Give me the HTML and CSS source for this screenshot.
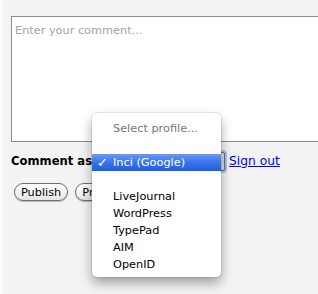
FILE: index.html
```html
<!DOCTYPE html>
<html>
<head>
<meta charset="utf-8">
<link rel="stylesheet" href="styles.css">
</head>
<body>
<div class="page">
  <div class="form">
    <div class="comment"><span class="placeholder">Enter your comment...</span></div>
    <div class="identity">
      <span class="as">Comment as</span>
      <span class="select-box"></span>
      <a class="signout" href="#">Sign out</a>
    </div>
    <div class="actions">
      <button class="pill">Publish</button>
      <button class="pill">Preview</button>
    </div>
  </div>
</div>
<ul class="menu">
  <li class="item muted">Select profile...</li>
  <li class="item blank"></li>
  <li class="item selected"><span class="check">✓</span>Inci (Google)</li>
  <li class="item blank"></li>
  <li class="item">LiveJournal</li>
  <li class="item">WordPress</li>
  <li class="item">TypePad</li>
  <li class="item">AIM</li>
  <li class="item">OpenID</li>
</ul>
</body>
</html>
```
FILE: styles.css
```css
html, body {
  margin: 0;
  padding: 0;
}
body {
  width: 318px;
  height: 294px;
  overflow: hidden;
  font-family: "DejaVu Sans", sans-serif;
  background: #f3f3f3;
}
.page {
  border-left: 3px solid #fbfbfb;
  height: 294px;
  box-sizing: border-box;
}
.form {
  padding: 16px 0 0 8px;
}
.comment {
  height: 126px;
  box-sizing: border-box;
  border: 1px solid #8c8c8c;
  border-right: none;
  background: #fff;
  padding: 2px 3px;
}
.placeholder {
  font-size: 11.3px;
  line-height: 14px;
  color: #a3a3a3;
}
.identity {
  display: flex;
  align-items: center;
  height: 20px;
  margin-top: 9px;
}
.as {
  font-weight: bold;
  font-size: 11.6px;
  color: #000;
}
.select-box {
  width: 129px;
  height: 17px;
  margin-left: 2px;
  border: 1px solid #6e6e6e;
  border-radius: 2px;
  background: #ddd;
  box-shadow: 0 0 0 2px rgba(120, 160, 225, 0.6);
}
.signout {
  margin-left: 4px;
  font-size: 12.3px;
  color: #0000ee;
  text-decoration: underline;
}
.actions {
  display: flex;
  gap: 7px;
  margin-top: 12px;
  padding-left: 3px;
}
.pill {
  height: 18px;
  padding: 0 6px;
  border: 1px solid #6f6f6f;
  border-radius: 9px;
  background: linear-gradient(#ffffff, #f1f1f1 60%, #e4e4e4);
  box-shadow: 0 1px 1px rgba(0, 0, 0, 0.25);
  font-family: "DejaVu Sans", sans-serif;
  font-size: 11.3px;
  color: #000;
  line-height: 15px;
}
.menu {
  position: absolute;
  left: 92px;
  top: 113px;
  width: 129px;
  margin: 0;
  padding: 7px 0 4px;
  list-style: none;
  background: #fff;
  border-radius: 5px;
  box-shadow: 0 0 0 1px rgba(0, 0, 0, 0.08), 0 6px 12px rgba(0, 0, 0, 0.35);
}
.item {
  height: 17px;
  line-height: 17px;
  padding-left: 21px;
  font-size: 11.3px;
  color: #000;
  position: relative;
}
.muted {
  color: #777;
}
.selected {
  color: #fff;
  background: linear-gradient(#6a9af5, #3a73ea 50%, #1f5de2);
}
.check {
  position: absolute;
  left: 5px;
  top: 0;
  font-size: 13px;
  font-weight: bold;
}
```
